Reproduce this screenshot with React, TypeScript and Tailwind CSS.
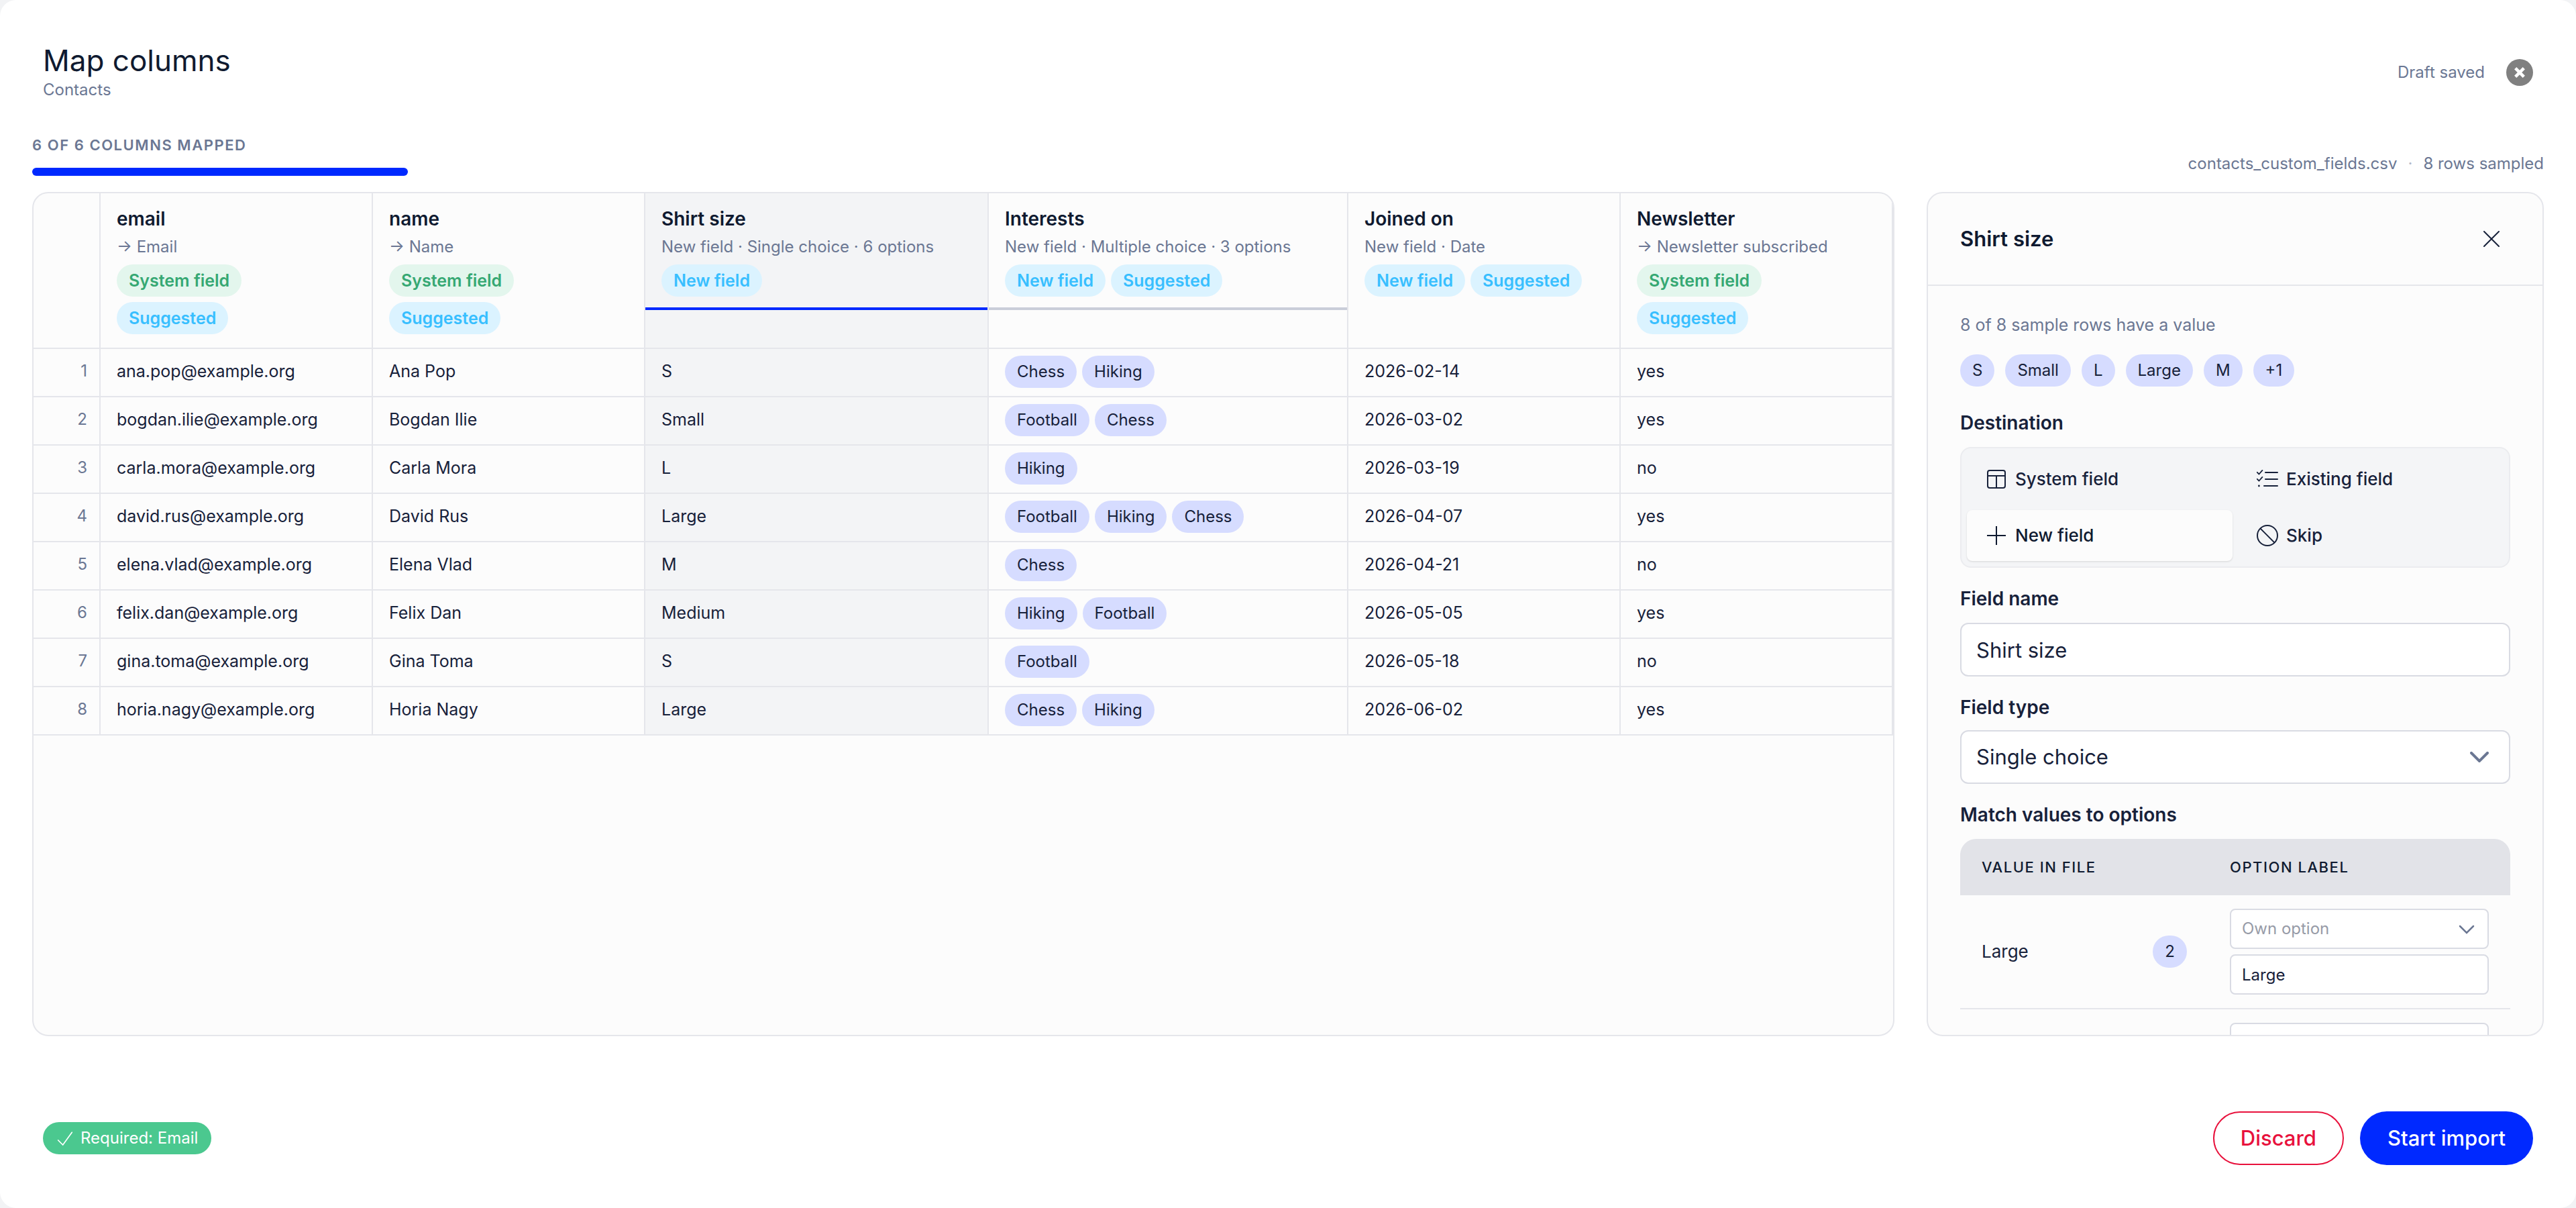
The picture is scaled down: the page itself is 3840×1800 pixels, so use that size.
import type { ReactNode } from "react";

type BadgeKind = "system" | "new" | "suggested";

type Column = {
  title: string;
  detail: string;
  badges: BadgeKind[];
  width: string;
  state?: "selected" | "hovered";
};

const columns: Column[] = [
  { title: "email", detail: "→ Email", badges: ["system", "suggested"], width: "w-[406px]" },
  { title: "name", detail: "→ Name", badges: ["system", "suggested"], width: "w-[406px]" },
  { title: "Shirt size", detail: "New field · Single choice · 6 options", badges: ["new"], width: "w-[512px]", state: "selected" },
  { title: "Interests", detail: "New field · Multiple choice · 3 options", badges: ["new", "suggested"], width: "w-[536px]", state: "hovered" },
  { title: "Joined on", detail: "New field · Date", badges: ["new", "suggested"], width: "w-[406px]" },
  { title: "Newsletter", detail: "→ Newsletter subscribed", badges: ["system", "suggested"], width: "w-[406px]" },
];

const rows: [string, string, string, string[], string, string][] = [
  ["ana.pop@example.org", "Ana Pop", "S", ["Chess", "Hiking"], "2026-02-14", "yes"],
  ["bogdan.ilie@example.org", "Bogdan Ilie", "Small", ["Football", "Chess"], "2026-03-02", "yes"],
  ["carla.mora@example.org", "Carla Mora", "L", ["Hiking"], "2026-03-19", "no"],
  ["david.rus@example.org", "David Rus", "Large", ["Football", "Hiking", "Chess"], "2026-04-07", "yes"],
  ["elena.vlad@example.org", "Elena Vlad", "M", ["Chess"], "2026-04-21", "no"],
  ["felix.dan@example.org", "Felix Dan", "Medium", ["Hiking", "Football"], "2026-05-05", "yes"],
  ["gina.toma@example.org", "Gina Toma", "S", ["Football"], "2026-05-18", "no"],
  ["horia.nagy@example.org", "Horia Nagy", "Large", ["Chess", "Hiking"], "2026-06-02", "yes"],
];

const badgeLabel: Record<BadgeKind, string> = {
  system: "System field",
  new: "New field",
  suggested: "Suggested",
};

const badgeStyle: Record<BadgeKind, string> = {
  system: "bg-[#e3f6ed] text-[#36a873]",
  new: "bg-[#dbf3ff] text-[#38bfff]",
  suggested: "bg-[#dbf3ff] text-[#38bfff]",
};

function Badge({ kind }: { kind: BadgeKind }) {
  return (
    <span className={`flex h-12 items-center rounded-full px-[18px] text-[25px] leading-8 font-semibold ${badgeStyle[kind]}`}>
      {badgeLabel[kind]}
    </span>
  );
}

function Chip({ children }: { children: ReactNode }) {
  return (
    <span className="flex h-12 items-center rounded-full bg-[#d6dcff] px-[18px] text-[24px] leading-8 text-[#17213a]">
      {children}
    </span>
  );
}

function Chevron({ small }: { small?: boolean }) {
  return small ? (
    <svg viewBox="0 0 24 14" className="pointer-events-none absolute top-6 right-[21px] h-3.5 w-6" fill="none" stroke="#6b7793" strokeWidth="2.5" strokeLinecap="round" aria-hidden="true">
      <path d="M2 2l10 10L22 2" />
    </svg>
  ) : (
    <svg viewBox="0 0 28 16" className="pointer-events-none absolute top-8 right-8 h-4 w-7" fill="none" stroke="#6b7793" strokeWidth="4" strokeLinecap="round" aria-hidden="true">
      <path d="M2 2l12 12L26 2" />
    </svg>
  );
}

function GridIcon() {
  return (
    <>
      <rect x="3" y="3" width="26" height="26" rx="3" />
      <path d="M3 11h26M16 11v18" />
    </>
  );
}

function ListIcon() {
  return (
    <>
      <path d="M13 6h18M13 16h18M11 26h20" strokeLinecap="round" />
      <path d="M.8 5.8l2.7 2.7 4.9-5.6M.8 15.8l2.7 2.7 4.9-5.6" strokeLinecap="round" strokeLinejoin="round" strokeWidth="1.8" />
      <circle cx="3.4" cy="26" r="1.4" fill="currentColor" stroke="none" />
    </>
  );
}

function SkipIcon() {
  return (
    <>
      <circle cx="16" cy="16" r="15" />
      <path d="M5.4 5.4l21.2 21.2" />
    </>
  );
}

const destinations: { label: string; icon: ReactNode; active?: boolean }[] = [
  { label: "System field", icon: <GridIcon /> },
  { label: "Existing field", icon: <ListIcon /> },
  { label: "New field", icon: <path d="M16 2v28M2 16h28" />, active: true },
  { label: "Skip", icon: <SkipIcon /> },
];

function PreviewTable() {
  return (
    <section className="min-w-0 flex-1 overflow-hidden rounded-3xl border-2 border-[#e5e6eb] bg-[#fcfcfc]">
      <table className="w-full table-fixed border-separate border-spacing-0 text-left text-[25px] leading-9">
        <thead>
          <tr className="align-top">
            <th className="w-[100px] border-r-2 border-b-2 border-[#e5e6eb]" aria-label="Row" />
            {columns.map((c) => (
              <th
                key={c.title}
                scope="col"
                className={`${c.width} border-r-2 border-b-2 border-[#e5e6eb] p-0 ${c.state === "selected" ? "bg-[#f3f4f6]" : ""}`}
              >
                <button
                  type="button"
                  className={`block w-full border-b-4 px-6 pt-[18px] pb-4 text-left ${
                    c.state === "selected" ? "border-[#0029ff]" : c.state === "hovered" ? "border-[#c9cdd9]" : "border-transparent"
                  }`}
                >
                  <span className="block text-[28px] leading-10 font-semibold text-[#0f1a30]">{c.title}</span>
                  <span className="block text-[24px] leading-[44px] font-normal whitespace-nowrap text-[#6b7793]">{c.detail}</span>
                  <span className="mt-1 flex flex-wrap gap-2">
                    {c.badges.map((b) => (
                      <Badge key={b} kind={b} />
                    ))}
                  </span>
                </button>
              </th>
            ))}
          </tr>
        </thead>
        <tbody>
          {rows.map((row, i) => (
            <tr key={row[0]} className="h-[72px]">
              <th scope="row" className="border-r-2 border-b-2 border-[#e5e6eb] pr-[18px] pb-1 text-right text-[24px] font-normal text-[#6b7793]">
                {i + 1}
              </th>
              {row.map((cell, j) => (
                <td
                  key={j}
                  className={`border-r-2 border-b-2 border-[#e5e6eb] px-6 ${j === 2 ? "bg-[#f3f4f6]" : ""} ${Array.isArray(cell) ? "pb-0.5" : "pb-1"}`}
                >
                  {Array.isArray(cell) ? (
                    <div className="flex gap-2">
                      {cell.map((v) => (
                        <Chip key={v}>{v}</Chip>
                      ))}
                    </div>
                  ) : (
                    cell
                  )}
                </td>
              ))}
            </tr>
          ))}
        </tbody>
      </table>
    </section>
  );
}

function OptionFields({ value }: { value?: string }) {
  return (
    <div className="flex flex-col gap-2">
      <div className="relative">
        <select
          aria-label="Match to option"
          className="block h-[60px] w-full appearance-none rounded-lg border-2 border-[#d9dbe3] bg-white pr-14 pl-4 text-[24px] leading-8 text-[#979ba7]"
        >
          {value && <option>Own option</option>}
        </select>
        {value && <Chevron small />}
      </div>
      <input
        aria-label="Option label"
        defaultValue={value}
        className="block h-[60px] w-full rounded-lg border-2 border-[#d9dbe3] bg-white px-4 text-[24px] leading-8"
      />
    </div>
  );
}

function FieldPanel() {
  return (
    <aside className="flex w-[920px] shrink-0 flex-col overflow-hidden rounded-3xl border-2 border-[#e5e6eb] bg-[#fcfcfc]">
      <header className="flex h-[138px] shrink-0 items-center justify-between border-b-2 border-[#e5e6eb] px-12">
        <h2 className="text-[31px] leading-10 font-semibold text-[#0f1a30]">Shirt size</h2>
        <button type="button" aria-label="Close panel" className="p-4">
          <svg viewBox="0 0 24 24" className="size-6" fill="none" stroke="currentColor" strokeWidth="2" strokeLinecap="round" aria-hidden="true">
            <path d="M1 1l22 22M23 1L1 23" />
          </svg>
        </button>
      </header>
      <div className="min-h-0 flex-1 overflow-y-auto px-12 pt-10 [scrollbar-width:none]">
        <p className="text-[25px] leading-9 text-[#6b7793]">8 of 8 sample rows have a value</p>
        <div className="mt-[26px] flex gap-4">
          {["S", "Small", "L", "Large", "M", "+1"].map((v) => (
            <Chip key={v}>{v}</Chip>
          ))}
        </div>

        <h3 id="destination" className="mt-[34px] text-[28px] leading-10 font-semibold">Destination</h3>
        <div role="radiogroup" aria-labelledby="destination" className="mt-4 grid grid-cols-2 gap-2 rounded-2xl border-2 border-[#ebecef] bg-[#f4f5f7] p-2">
          {destinations.map((d) => (
            <label
              key={d.label}
              className={`relative flex h-[76px] items-center gap-3 rounded-lg px-7 text-[26px] leading-9 font-medium ${d.active ? "bg-[#fcfcfc] text-[#0f1a30] shadow-sm" : ""}`}
            >
              <input type="radio" name="destination" defaultChecked={d.active} className="sr-only" />
              <svg viewBox="0 0 32 32" className="size-8" fill="none" stroke="currentColor" strokeWidth="2" aria-hidden="true">
                {d.icon}
              </svg>
              {d.label}
            </label>
          ))}
        </div>

        <label htmlFor="field-name" className="mt-[26px] block text-[28px] leading-10 font-semibold">Field name</label>
        <input
          id="field-name"
          defaultValue="Shirt size"
          className="mt-4 block h-20 w-full rounded-xl border-2 border-[#d9dbe3] bg-white px-[22px] text-[31px] leading-10"
        />

        <label htmlFor="field-type" className="mt-[26px] block text-[28px] leading-10 font-semibold">Field type</label>
        <div className="relative mt-3.5">
          <select id="field-type" className="block h-20 w-full appearance-none rounded-xl border-2 border-[#d9dbe3] bg-white pr-16 pl-[22px] text-[31px] leading-10">
            <option>Single choice</option>
          </select>
          <Chevron />
        </div>

        <h3 id="match-values" className="mt-[26px] text-[28px] leading-10 font-semibold">Match values to options</h3>
        <table aria-labelledby="match-values" className="mt-4 w-full table-fixed border-separate border-spacing-0 text-left">
          <thead>
            <tr className="h-[84px] text-[22px] leading-8 tracking-[0.07em] text-[#0f1a30] uppercase">
              <th scope="col" className="w-[370px] rounded-tl-3xl bg-[#e2e3e8] px-8 font-medium">Value in file</th>
              <th scope="col" className="rounded-tr-3xl bg-[#e2e3e8] px-8 font-medium">Option label</th>
            </tr>
          </thead>
          <tbody>
            <tr>
              <td className="border-b-2 border-[#e5e6eb] px-8 py-5">
                <div className="flex items-center justify-between text-[26px] leading-9">
                  Large
                  <Chip>2</Chip>
                </div>
              </td>
              <td className="border-b-2 border-[#e5e6eb] px-8 py-5">
                <OptionFields value="Large" />
              </td>
            </tr>
            <tr>
              <td className="px-8 py-5" />
              <td className="px-8 py-5">
                <OptionFields />
              </td>
            </tr>
          </tbody>
        </table>
      </div>
    </aside>
  );
}

export default function App() {
  return (
    <div className="h-screen bg-[#f2f3f5] font-['Inter','Liberation_Sans',sans-serif] text-[#17213a]">
      <div className="flex h-full flex-col overflow-hidden rounded-3xl bg-white">
        <header className="flex items-center justify-between px-16 pt-[60px]">
          <div className="pb-2">
            <h1 className="text-[44px] leading-[60px] text-[#0f1a30]">Map columns</h1>
            <p className="text-[24px] leading-7 text-[#6b7793]">Contacts</p>
          </div>
          <div className="flex items-center gap-8">
            <span className="text-[24px] leading-8 text-[#6b7793]">Draft saved</span>
            <button type="button" aria-label="Close" className="size-10 rounded-full bg-[#808080]">
              <svg viewBox="0 0 40 40" className="size-10" fill="none" stroke="white" strokeWidth="4.6" aria-hidden="true">
                <path d="M13.7 13.7l12.6 12.6M26.3 13.7L13.7 26.3" />
              </svg>
            </button>
          </div>
        </header>

        <div className="mt-11 flex items-end justify-between px-12">
          <div className="w-[560px]">
            <p id="progress" className="text-[22px] leading-8 font-semibold tracking-[0.07em] text-[#6b7793] uppercase">6 of 6 columns mapped</p>
            <div role="progressbar" aria-labelledby="progress" aria-valuenow={6} aria-valuemax={6} className="mt-[18px] h-3 rounded-full bg-[#0029ff]" />
          </div>
          <p className="flex gap-4 text-[24px] leading-9 text-[#6b7793]">
            <span>contacts_custom_fields.csv</span>
            <span className="text-[#b3b9c9]">·</span>
            <span>8 rows sampled</span>
          </p>
        </div>

        <main className="mt-6 flex min-h-0 flex-1 gap-12 px-12">
          <PreviewTable />
          <FieldPanel />
        </main>

        <footer className="mt-28 flex items-center justify-between px-16 pb-16">
          <span className="flex h-12 items-center gap-3 rounded-full bg-[#4bc88f] px-5 text-[24px] leading-8 text-white">
            <svg viewBox="0 0 24 24" className="size-6" fill="none" stroke="currentColor" strokeWidth="1.7" strokeLinecap="round" aria-hidden="true">
              <path d="M2.7 15l7 7L23.3 3.3" />
            </svg>
            Required: Email
          </span>
          <div className="flex gap-6">
            <button type="button" className="h-20 rounded-full border-2 border-[#e8113c] px-[39px] text-[31px] leading-10 font-medium text-[#e8113c]">
              Discard
            </button>
            <button type="button" className="h-20 rounded-full bg-[#0029ff] px-[41px] text-[31px] leading-10 font-medium text-white">
              Start import
            </button>
          </div>
        </footer>
      </div>
    </div>
  );
}
